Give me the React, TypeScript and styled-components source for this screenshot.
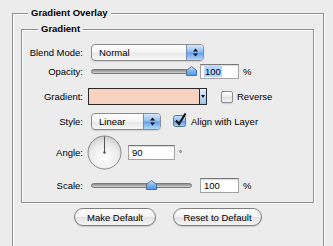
import React from "react";
import styled, { createGlobalStyle } from "styled-components";

const GlobalStyle = createGlobalStyle`
  html, body {
    margin: 0;
    padding: 0;
    background: #ececec;
    overflow: hidden;
  }
  body {
    font-family: "Liberation Sans", Arial, sans-serif;
    font-size: 9.5px;
    color: #000;
  }
`;

const Page = styled.div`
  width: 333px;
  height: 246px;
  overflow: hidden;
`;

const Group = styled.fieldset<{ $outer?: boolean }>`
  margin: ${(p) => (p.$outer ? "7px 0 0 12px" : "4px 0 0 8px")};
  padding: ${(p) => (p.$outer ? "0" : "8px 0 6px")};
  width: ${(p) => (p.$outer ? "312px" : "293px")};
  height: ${(p) => (p.$outer ? "270px" : "auto")};
  min-width: 0;
  box-sizing: border-box;
  border: 1px solid #8e8e8e;
  box-shadow: 1px 1px 0 #fff, inset 1px 1px 0 #fff;
`;

const Legend = styled.legend<{ $outer?: boolean }>`
  margin-left: ${(p) => (p.$outer ? "15px" : "16px")};
  padding: 0 3px;
  height: 12px;
  line-height: 12px;
  font-weight: bold;
  background: #ececec;
`;

const Form = styled.div`
  display: grid;
  grid-template-columns: 61px 1fr;
  grid-template-rows: 18px 20px 31px 18px 44px 22px;
  column-gap: 8px;
  align-items: center;
`;

const Label = styled.div`
  text-align: right;
  white-space: nowrap;
`;

const Control = styled.div<{ $gap?: number }>`
  display: flex;
  align-items: center;
  gap: ${(p) => p.$gap ?? 0}px;
`;

const Popup = styled.div<{ $w: number }>`
  width: ${(p) => p.$w}px;
  height: 17px;
  box-sizing: border-box;
  display: flex;
  border: 1px solid #8c8c8c;
  border-radius: 4px;
  overflow: hidden;
  background: linear-gradient(#ffffff, #f4f4f4 50%, #e6e6e6 52%, #f8f8f8);
  box-shadow: 0 1px 1px rgba(0, 0, 0, 0.12);
`;

const PopupText = styled.span`
  flex: 1;
  padding-left: 7px;
  line-height: 15px;
`;

const Stepper = styled.span`
  width: 16px;
  display: flex;
  align-items: center;
  justify-content: center;
  border-left: 1px solid #6d8fbf;
  background: linear-gradient(#d6e8fb, #8dbcf0 48%, #5f9fe8 52%, #b4d8fc);
`;

const SliderBox = styled.div`
  position: relative;
  width: 101px;
  height: 13px;
  display: flex;
  align-items: center;
`;

const Track = styled.div`
  flex: 1;
  height: 5px;
  box-sizing: border-box;
  border-radius: 3px;
  border: 1px solid #7a7a7a;
  background: linear-gradient(#8d8d8d, #b4b4b4 60%, #d4d4d4);
`;

const ThumbSvg = styled.svg`
  position: absolute;
  top: 1px;
`;

const Field = styled.div<{ $w: number }>`
  width: ${(p) => p.$w}px;
  height: 15px;
  box-sizing: border-box;
  padding-left: 3px;
  line-height: 13px;
  background: #fff;
  border: 1px solid #a2a2a2;
  border-top-color: #777;
  box-shadow: inset 0 1px 1px rgba(0, 0, 0, 0.15);
`;

const Selected = styled.span`
  background: #b5d5fd;
  padding: 0 1px;
`;

const Unit = styled.span<{ $raise?: boolean }>`
  margin-left: 4px;
  align-self: ${(p) => (p.$raise ? "flex-start" : "center")};
  margin-top: ${(p) => (p.$raise ? "14px" : "0")};
  font-size: ${(p) => (p.$raise ? "8px" : "9.5px")};
`;

const Swatch = styled.div`
  margin-left: -3px;
  display: flex;
  height: 17px;
  box-sizing: border-box;
  border: 1px solid #2a2a2a;
`;

const SwatchFill = styled.div`
  width: 110px;
  background: #f8d3bf;
  border-right: 1px solid #2a2a2a;
`;

const SwatchArrow = styled.div`
  width: 6px;
  display: flex;
  align-items: center;
  justify-content: center;
  background: linear-gradient(#e4f0fc, #9cc4ee);
`;

const Check = styled.label<{ $ml: number }>`
  margin-left: ${(p) => p.$ml}px;
  display: flex;
  align-items: center;
  gap: 4px;
  white-space: nowrap;
`;

const Box = styled.span`
  width: 12px;
  height: 12px;
  box-sizing: border-box;
  border: 1px solid #8c8c8c;
  border-radius: 2px;
  background: linear-gradient(#ffffff, #ececec 50%, #e0e0e0 52%, #f6f6f6);
  box-shadow: 0 1px 1px rgba(0, 0, 0, 0.12);
`;

const DialSvg = styled.svg`
  margin-left: -4px;
  margin-right: 6px;
`;

const Buttons = styled.div`
  margin-top: 5px;
  display: flex;
  justify-content: center;
  gap: 17px;
`;

const Button = styled.button<{ $w: number }>`
  width: ${(p) => p.$w}px;
  height: 18px;
  padding: 0;
  font: inherit;
  color: #000;
  border: 1px solid #7e7e7e;
  border-radius: 9px;
  background: linear-gradient(#ffffff, #f3f3f3 50%, #e3e3e3 52%, #f6f6f6);
  box-shadow: 0 1px 1px rgba(0, 0, 0, 0.15);
`;

const Arrows = () => (
  <svg width="5" height="9" viewBox="0 0 5 9">
    <path d="M0 3.5 L2.5 0.5 L5 3.5 Z M0 5.5 L2.5 8.5 L5 5.5 Z" fill="#111" />
  </svg>
);

const Slider = ({ pos }: { pos: number }) => (
  <SliderBox>
    <Track />
    <ThumbSvg width="11" height="10" viewBox="0 0 11 10" style={{ left: pos }}>
      <defs>
        <linearGradient id="thumbG" x1="0" y1="0" x2="0" y2="1">
          <stop offset="0" stopColor="#d8ebfd" />
          <stop offset="0.5" stopColor="#7fb4ef" />
          <stop offset="1" stopColor="#4f95e6" />
        </linearGradient>
      </defs>
      <path
        d="M0.5 4.5 L5.5 0.5 L10.5 4.5 L10.5 9.5 L0.5 9.5 Z"
        fill="url(#thumbG)"
        stroke="#4d6f9a"
        strokeWidth="1"
      />
    </ThumbSvg>
  </SliderBox>
);

const CheckedBox = () => (
  <svg width="14" height="14" viewBox="0 0 14 14" style={{ marginTop: -2 }}>
    <defs>
      <linearGradient id="boxG" x1="0" y1="0" x2="0" y2="1">
        <stop offset="0" stopColor="#cfe4fb" />
        <stop offset="0.5" stopColor="#86b9ef" />
        <stop offset="0.52" stopColor="#5d9de6" />
        <stop offset="1" stopColor="#a8d1fb" />
      </linearGradient>
    </defs>
    <rect x="0.5" y="2.5" width="12" height="11" rx="2" fill="url(#boxG)" stroke="#56789f" />
    <path d="M3 7.5 L6 11 L12.5 0.5" fill="none" stroke="#111" strokeWidth="2" />
  </svg>
);

const Dial = () => (
  <DialSvg width="35" height="35" viewBox="0 0 35 35">
    <defs>
      <radialGradient id="dialG" cx="0.5" cy="0.65" r="0.6">
        <stop offset="0" stopColor="#ffffff" />
        <stop offset="0.7" stopColor="#ececec" />
        <stop offset="1" stopColor="#d2d2d2" />
      </radialGradient>
    </defs>
    <circle cx="17.5" cy="17.5" r="16.5" fill="url(#dialG)" stroke="#8a8a8a" />
    <line x1="17.5" y1="17.5" x2="17.5" y2="1.5" stroke="#555" strokeWidth="1" />
    <circle cx="17.5" cy="17.5" r="1.2" fill="#555" />
  </DialSvg>
);

export default function App() {
  return (
    <Page>
      <GlobalStyle />
      <Group $outer>
        <Legend $outer>Gradient Overlay</Legend>
        <Group>
          <Legend>Gradient</Legend>
          <Form>
            <Label>Blend Mode:</Label>
            <Control>
              <Popup $w={113}>
                <PopupText>Normal</PopupText>
                <Stepper>
                  <Arrows />
                </Stepper>
              </Popup>
            </Control>

            <Label>Opacity:</Label>
            <Control>
              <Slider pos={95} />
              <Field $w={39} style={{ marginLeft: 8 }}>
                <Selected>100</Selected>
              </Field>
              <Unit>%</Unit>
            </Control>

            <Label>Gradient:</Label>
            <Control>
              <Swatch>
                <SwatchFill />
                <SwatchArrow>
                  <svg width="4" height="3" viewBox="0 0 4 3">
                    <path d="M0 0 L4 0 L2 3 Z" fill="#111" />
                  </svg>
                </SwatchArrow>
              </Swatch>
              <Check $ml={14}>
                <Box />
                <span>Reverse</span>
              </Check>
            </Control>

            <Label>Style:</Label>
            <Control>
              <Popup $w={70}>
                <PopupText>Linear</PopupText>
                <Stepper>
                  <Arrows />
                </Stepper>
              </Popup>
              <Check $ml={12}>
                <CheckedBox />
                <span>Align with Layer</span>
              </Check>
            </Control>

            <Label>Angle:</Label>
            <Control>
              <Dial />
              <Field $w={47}>90</Field>
              <Unit $raise>°</Unit>
            </Control>

            <Label>Scale:</Label>
            <Control>
              <Slider pos={55} />
              <Field $w={39} style={{ marginLeft: 8 }}>
                100
              </Field>
              <Unit>%</Unit>
            </Control>
          </Form>
        </Group>
        <Buttons>
          <Button $w={82}>Make Default</Button>
          <Button $w={89}>Reset to Default</Button>
        </Buttons>
      </Group>
    </Page>
  );
}
